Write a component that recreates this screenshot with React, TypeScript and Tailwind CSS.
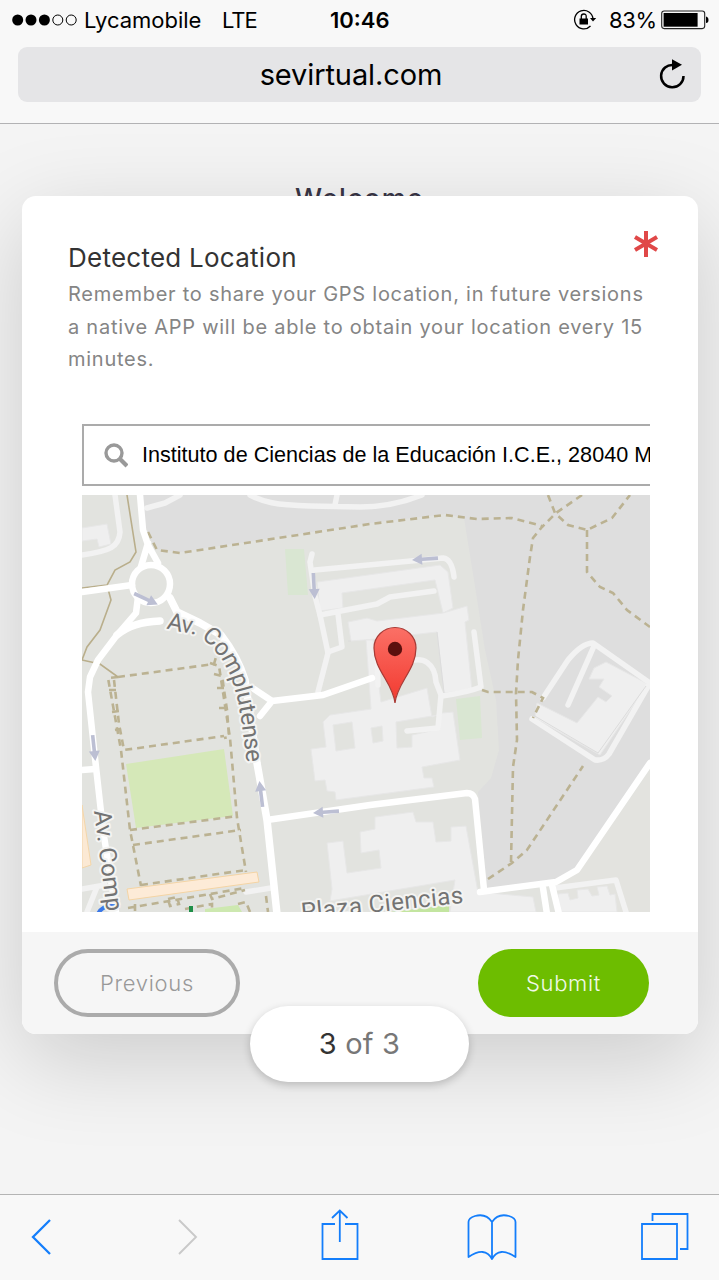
import React from "react";

const road = { fill: "none", stroke: "#fff", strokeLinejoin: "round" as const, strokeLinecap: "round" as const };
const footpath = { fill: "none", stroke: "#bbb292", strokeWidth: 2.6, strokeDasharray: "7 5" };

function Arrow({ x, y, angle }: { x: number; y: number; angle: number }) {
  return (
    <path
      transform={`translate(${x} ${y}) rotate(${angle})`}
      d="M-13 -1.8H3V-5.5L13 0L3 5.5V1.8H-13Z"
      fill="#bcbfd3"
    />
  );
}

function CampusMap() {
  return (
    <svg viewBox="82 495 568 417" className="block h-[417px] w-[568px]" fontFamily="Roboto, sans-serif">
      <defs>
        <linearGradient id="pin" x1="0" y1="0" x2="0" y2="1">
          <stop offset="0" stopColor="#fb7066" />
          <stop offset="1" stopColor="#f2392f" />
        </linearGradient>
        <path id="avenue" d="M166 628C180 634 193 630 205 641C222 655 232 674 238 702C242 722 244 740 247 766" />
        <path id="avenueWest" d="M94 811L109 930" />
        <path id="plaza" d="M302 920L472 902" />
      </defs>
      <rect x="82" y="495" width="568" height="417" fill="#e2e3df" />
      <path d="M142 495L146 528L155 549L180 552L370 523L445 514L464 518L474 580L485 650L496 700L499 750L491 778L478 792L487 888L557 882L577 870L650 763V495Z" fill="#dedede" />
      <path d="M650 770L577 872L557 884L560 912H650Z" fill="#e3e3df" />

      <path d="M285 549H304L308 595H288Z" fill="#d9e6d2" />
      <path d="M456 699L480 696L482 738L460 740Z" fill="#d9e6d2" />
      <path d="M126 764L224 749L233 816L136 828Z" fill="#d5e8b8" />
      <path d="M205 909L238 905L242 912H205Z" fill="#cde8b0" />
      <path d="M390 912L449 905V912Z" fill="#c3e5a0" />
      <path d="M82 805L91 865L82 868Z" fill="#fbe9d4" stroke="#f4d6a9" />

      <g fill="#efefef" stroke="#e7e7e7" strokeWidth="1">
        <path d="M82 528L107 524L111 544L99 547L97 539L82 541Z" />
        <path d="M317 582L440 565L448 572L453 608L443 613L435 580L342 593L343 608L320 611Z" />
        <path d="M348 622L367 618L377 621L443 613L467 606L469 620L465 622L472 690L444 693L437 632L376 639L351 641Z" />
        <path fillRule="evenodd" d="M373 640L381 702L427 688L429 700L432 717L442 713L453 712L460 760L422 767L424 778L432 778L434 787L336 800L335 792L327 791L325 780L315 781L311 749L326 747L323 722L330 715L371 709L366 640ZM333 725L352 722L355 748L336 751ZM371 728L382 726L383 741L373 743ZM396 722L438 715L440 729L412 735V747L397 748Z" />
        <path d="M360 832L375 829V817L413 812L416 822L433 822L436 842L451 841V827L466 826L478 892L533 897L536 912H450L455 880L330 901L332 889L327 843L343 841L347 873L381 868L379 850L361 853Z" />
        <path d="M537 703L577 723L598 697L606 702L612 696L599 687L604 679L589 679L594 668L606 662L648 684L600 755L535 718Z" />
        <path d="M558 894L568 893L570 900L578 898L577 890L588 889L592 896L599 895L597 887L607 886L610 895L615 894L617 912H557Z" />
      </g>

      <g {...road} stroke="#f2f2f2" strokeWidth="5.5">
        <path d="M115 495L120 532C119 547 110 551 82 555" />
        <path d="M147 508L165 503L180 495M250 495C263 502 275 505 310 506L360 507Q392 507 422 495M337 495L335 505" />
        <path d="M312 554L310 562L315 596L320 615L328 653L318 692M315 570L443 558Q452 559 454 577" />
        <path d="M320 615L377 604L390 597L434 591M338 614L342 647L328 652" />
        <path d="M377 645L378 685M474 632L481 687Q469 692 442 696" />
        <path d="M404 664C424 653 435 665 436 682L441 695L438 728L407 731" />
        <path d="M543 698L568 660Q582 643 593 643L650 683L609 754Q604 761 595 760L532 719M594 646L568 705" />
        <path d="M555 888L616 880L626 912M82 889L105 885M97 887L87 912M246 892L271 888" />
      </g>
      <path d="M444 693L437 632M348 641L351 641M533 715L598 753L646 686" fill="none" stroke="#dcdcdc" />

      <g {...footpath}>
        <path d="M148 532L157 550L180 553L370 524L445 515L477 519L512 518L542 526" />
        <path d="M548 495L555 513L568 525L587 530L612 518L630 495M587 530V572L600 587L613 593L627 610L650 627" />
        <path d="M582 495L556 513L542 527L533 538L530 557L523 610L518 660L516 693L517 740L513 767L511 863" />
        <path d="M488 879L512 863L527 850L583 766M482 690L488 692H532L543 698L533 718" />
        <path d="M118 677L214 664L218 650M118 677L108 678L121 750L130 830L141 886M114 680L119 724L124 750L224 736" />
        <path d="M210 663L219 666L230 738L237 818L246 872M214 674L222 676L227 710L229 737L224 738M109 690L116 690M112 712L119 711M115 730L121 729M217 688H224M219 708H226" />
        <path d="M130 830L238 816M133 845L241 830M141 885L246 870M128 908L245 888M135 904V912M168 899L177 897L179 904L170 906ZM210 894L212 899L245 890M185 909L212 904V912M238 904L246 902L250 912M266 896L268 912" />
      </g>
      <path d="M127 495L136 552L130 562L115 570L107 585L111 600L100 630L87 647L82 660L100 664L118 677M82 588L107 585" fill="none" stroke="#b9ae8b" strokeWidth="1.6" />

      <g {...road} strokeWidth="6.5">
        <path d="M140 495L143 530L148 545L158 563M148 543L140 570" />
        <circle cx="151" cy="584" r="19" fill="#e2e3df" />
        <path d="M82 592L132 585M138 597L136 613L117 635L98 660L90 677L88 692L95 758L103 830L116 912" />
        <path d="M117 635Q132 622 160 621M170 598L177 612L200 623L221 635Q238 657 245 680L257 763L267 820L277 914" strokeWidth="7.5" />
        <path d="M254 689L272 701L323 695L372 678M272 701L260 716M267 820L370 805L467 793Q473 793 475 799L484 890M82 770L95 769" />
        <path d="M480 892L556 882L577 870L650 763M543 888L547 914M552 885L559 914" />
      </g>

      <path d="M127 889L257 872L259 882L129 900Z" fill="#fdebd7" stroke="#f4d4a4" />
      <path d="M189 906H193V912H189Z" fill="#1f8f48" />
      <path d="M98 914Q103 903 120 907" fill="none" stroke="#3b78e7" strokeWidth="4" />

      <Arrow x={314} y={586} angle={87} />
      <Arrow x={425} y={559} angle={176} />
      <Arrow x={146} y={599} angle={25} />
      <Arrow x={94} y={748} angle={84} />
      <Arrow x={261} y={794} angle={-97} />
      <Arrow x={326} y={812} angle={176} />

      <g fontSize="24" fill="#737373" stroke="#f4f4f2" strokeWidth="4" strokeLinejoin="round" paintOrder="stroke">
        <text textLength="174" lengthAdjust="spacing"><textPath href="#avenue">Av. Complutense</textPath></text>
        <text><textPath href="#avenueWest">Av. Comp</textPath></text>
        <text letterSpacing="0.5"><textPath href="#plaza">Plaza Ciencias</textPath></text>
      </g>

      <path d="M395 703C393 683 374 670 374 648A21 20.5 0 0 1 416 648C416 670 397 683 395 703Z" fill="url(#pin)" stroke="#a83a35" strokeWidth="1.2" />
      <circle cx="395" cy="649" r="7.2" fill="#5b100e" />
    </svg>
  );
}

function StatusBar() {
  return (
    <div className="flex h-10 items-center pl-3 text-[22px] text-black">
      <svg className="h-3 w-[66px]" viewBox="0 0 66 12">
        <circle cx="5.7" cy="6" r="5.5" />
        <circle cx="19" cy="6" r="5.5" />
        <circle cx="32.4" cy="6" r="5.5" />
        <circle cx="45.8" cy="6" r="5" fill="none" stroke="#000" />
        <circle cx="59.2" cy="6" r="5" fill="none" stroke="#000" />
      </svg>
      <span className="ml-[6px] w-[138px]">Lycamobile</span>
      <span className="w-[108px] tracking-[-1px]">LTE</span>
      <span className="w-[243px] font-semibold">10:46</span>
      <svg className="h-[22px] w-[24px]" viewBox="0 0 24 22" fill="none" stroke="#000" strokeWidth="1.3">
        <path d="M17.5 17A9.2 9.2 0 1 1 20 10" />
        <path d="M17 9H23.2L20 12.5Z" fill="#000" stroke="none" />
        <path d="M6.5 9.5H15V15.5H6.5Z" fill="#000" stroke="none" />
        <path d="M8.3 10V7.5Q8.3 5 10.8 5T13.2 7.5V10" />
      </svg>
      <span className="ml-[12px] w-[52px] tracking-[-0.4px]">83%</span>
      <svg className="h-[20px] w-[48px]" viewBox="0 0 48 20">
        <rect x=".7" y="1" width="43" height="17.6" rx="2.5" fill="none" stroke="#222" strokeWidth="1.1" />
        <rect x="2.6" y="3" width="34" height="13.7" />
        <path d="M45 6.5Q47.5 7 47.5 10T45 13Z" />
      </svg>
    </div>
  );
}

function Toolbar() {
  return (
    <footer className="z-10 flex h-[86px] shrink-0 items-start justify-between border-t border-[#b4b4b4] bg-[#f8f8f8] pt-[14px] pr-[29px] pl-[30px]">
      <svg className="h-14 w-6" viewBox="0 0 24 56" fill="none" stroke="#147efb" strokeWidth="2.3">
        <path d="M20 11L3 28L20 45" />
      </svg>
      <svg className="-ml-[1px] h-14 w-6" viewBox="0 0 24 56" fill="none" stroke="#c9c9c9" strokeWidth="1.9">
        <path d="M2 11L19 28L2 45" />
      </svg>
      <svg className="-ml-[4px] h-14 w-10" viewBox="0 0 40 56" fill="none" stroke="#147efb" strokeWidth="1.8">
        <path d="M15 15H2.5V50H37.5V15H25M19.8 33V2M12 9L19.8 1.5L27.5 9" />
      </svg>
      <svg className="-ml-[17px] h-14 w-[50px]" viewBox="0 0 50 56" fill="none" stroke="#147efb" strokeWidth="1.8" strokeLinejoin="round">
        <path d="M25 13Q19 4 8 7Q1.5 9 1.5 13V48Q18 37 25 50Q32 37 48.5 48V13Q48.5 9 42 7Q31 4 25 13V50" />
      </svg>
      <svg className="h-14 w-[50px]" viewBox="0 0 50 56" fill="none" stroke="#147efb" strokeWidth="1.8">
        <path d="M2 15H37V50H2ZM12.5 12V5H47.5V40H40" />
      </svg>
    </footer>
  );
}

export default function App() {
  return (
    <div className="flex h-[1280px] w-[719px] flex-col overflow-hidden bg-[#f4f4f4] font-['Inter',sans-serif]">
      <header className="z-10 h-[124px] shrink-0 border-b border-[#b2b2b4] bg-[#f8f8f8]">
        <StatusBar />
        <div className="mx-[18px] mt-[7px] flex h-[55px] items-center rounded-[9px] bg-[#e5e5e7] pr-4">
          <span className="flex-1 pl-[25px] text-center text-[29px] tracking-[-0.1px] text-black">sevirtual.com</span>
          <svg className="h-8 w-[26px]" viewBox="0 0 26 32" fill="none" stroke="#000" strokeWidth="2.5">
            <path d="M14.5 6A11.2 11.2 0 1 0 24.5 17" />
            <path d="M13 .3L23 5.8L13 11.5Z" fill="#000" stroke="none" />
          </svg>
        </div>
      </header>

      <main className="relative min-h-0 flex-1 px-[22px] pt-[72px]">
        <h1 className="absolute inset-x-0 top-[57px] text-center text-[27px] leading-9 font-medium tracking-[1.3px] text-[#383545]">Welcome</h1>
        <section className="relative flex h-[838px] w-[676px] flex-col rounded-[14px] bg-white shadow-[0_25px_90px_rgba(0,0,0,0.17)]">
          <div className="flex h-[228px] shrink-0 justify-between pt-[42px] pr-[39px] pl-[46px]">
            <div>
              <h2 className="text-[26px] leading-10 tracking-[0.25px] whitespace-nowrap text-[#333]">Detected Location</h2>
              <p className="text-[20px] leading-[32.5px] tracking-[0.75px] whitespace-nowrap text-[#858585]">
                Remember to share your GPS location, in future versions<br />
                a native APP will be able to obtain your location every 15<br />
                minutes.
              </p>
            </div>
            <svg className="-mt-[8px] -ml-6 h-[28px] w-[26px] shrink-0" viewBox="0 0 26 28" fill="none" stroke="#e04848" strokeWidth="4">
              <path d="M13 1V27M2 7L24 20M24 7L2 20" />
            </svg>
          </div>
          <div className="ml-[60px] w-[568px] overflow-hidden">
            <div className="mb-[9px] flex h-[62px] w-[700px] items-center border-2 border-[#ababab] bg-white pl-[20px]">
              <svg className="mr-[14px] h-[25px] w-[24px]" viewBox="0 0 24 25" fill="none" stroke="#999" strokeWidth="3.4">
                <circle cx="10" cy="10" r="8" />
                <path d="M15.5 15.5L23 23" strokeWidth="4.2" />
              </svg>
              <span className="font-['Liberation_Sans',Arial,sans-serif] text-[21.6px] whitespace-nowrap text-black">Instituto de Ciencias de la Educación I.C.E., 28040 Madrid</span>
            </div>
            <CampusMap />
          </div>
          <div className="mt-auto flex h-[102px] items-start justify-between rounded-b-[14px] bg-[#f6f6f6] pt-[17px] pr-[49px] pl-[32px] text-[22px]">
            <button className="h-[68px] w-[186px] rounded-full border-4 border-[#ababab] font-light tracking-[0.7px] text-[#999]">Previous</button>
            <button className="h-[68px] w-[171px] rounded-full bg-[#6dbd00] font-light tracking-[0.7px] text-[#f1f9e8]">Submit</button>
          </div>
          <div className="absolute bottom-[-48px] left-[228px] flex h-[76px] w-[219px] items-center justify-center rounded-full bg-white text-[29px] tracking-[0.2px] whitespace-pre text-[#777] shadow-[0_3px_8px_rgba(0,0,0,0.2)]">
            <span className="text-[#333]">3</span> of 3
          </div>
        </section>
      </main>
      <Toolbar />
    </div>
  );
}
